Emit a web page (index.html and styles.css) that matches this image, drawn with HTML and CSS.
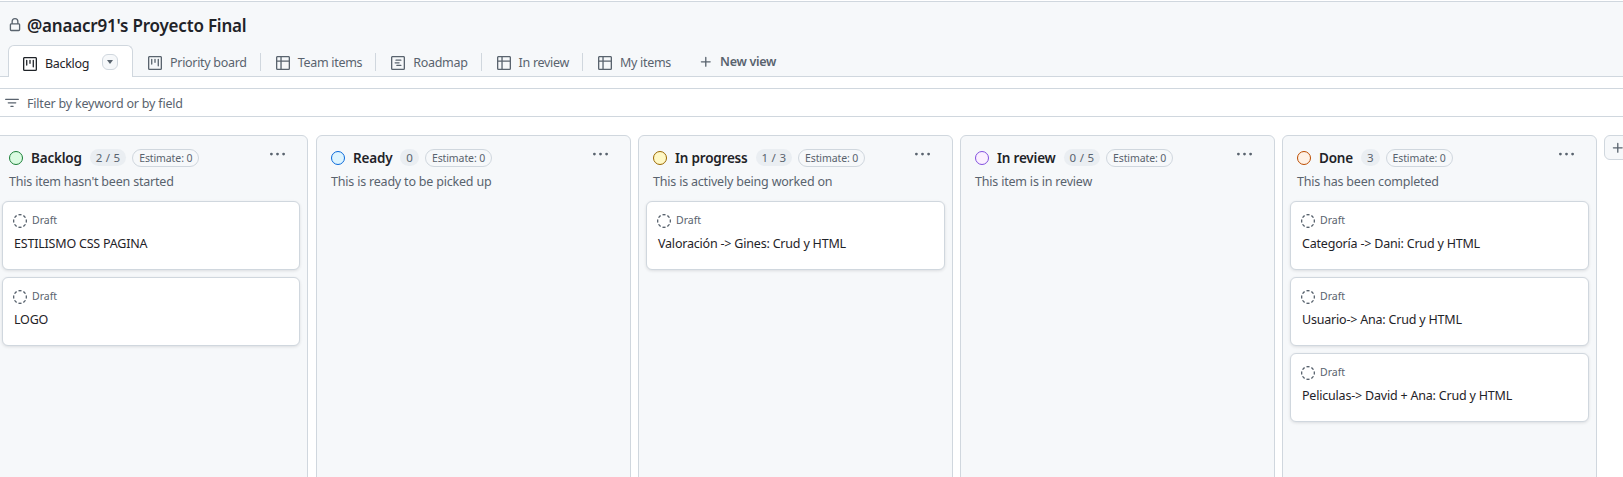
FILE: index.html
```html
<!DOCTYPE html>
<html lang="en">
<head>
<meta charset="utf-8">
<title>@anaacr91's Proyecto Final</title>
<link rel="stylesheet" href="styles.css">
</head>
<body>
<svg class="sprite" aria-hidden="true">
  <symbol id="i-lock" viewBox="0 0 16 16"><path d="M4 4a4 4 0 0 1 8 0v2h.25c.966 0 1.75.784 1.75 1.75v5.5A1.75 1.75 0 0 1 12.25 15h-8.5A1.75 1.75 0 0 1 2 13.25v-5.5C2 6.784 2.784 6 3.75 6H4Zm8.25 3.5h-8.5a.25.25 0 0 0-.25.25v5.5c0 .138.112.25.25.25h8.5a.25.25 0 0 0 .25-.25v-5.5a.25.25 0 0 0-.25-.25ZM10.5 6V4a2.5 2.5 0 1 0-5 0v2Z"/></symbol>
  <symbol id="i-project" viewBox="0 0 16 16"><path d="M1.75 0h12.5C15.216 0 16 .784 16 1.75v12.5A1.75 1.75 0 0 1 14.25 16H1.75A1.75 1.75 0 0 1 0 14.25V1.75C0 .784.784 0 1.75 0ZM1.5 1.75v12.5c0 .138.112.25.25.25h12.5a.25.25 0 0 0 .25-.25V1.75a.25.25 0 0 0-.25-.25H1.75a.25.25 0 0 0-.25.25ZM11.75 3a.75.75 0 0 1 .75.75v7.5a.75.75 0 0 1-1.5 0v-7.5a.75.75 0 0 1 .75-.75Zm-8.25.75a.75.75 0 0 1 1.5 0v5.5a.75.75 0 0 1-1.5 0ZM8 3a.75.75 0 0 1 .75.75v3.5a.75.75 0 0 1-1.5 0v-3.5A.75.75 0 0 1 8 3Z"/></symbol>
  <symbol id="i-table" viewBox="0 0 16 16"><path d="M0 1.75C0 .784.784 0 1.75 0h12.5C15.216 0 16 .784 16 1.75v12.5A1.75 1.75 0 0 1 14.25 16H1.75A1.75 1.75 0 0 1 0 14.25ZM6.5 6.5v8h7.75a.25.25 0 0 0 .25-.25V6.5Zm8-1.5V1.75a.25.25 0 0 0-.25-.25H6.5V5Zm-13 1.5v7.75c0 .138.112.25.25.25H5v-8ZM5 5V1.5H1.75a.25.25 0 0 0-.25.25V5Z"/></symbol>
  <symbol id="i-roadmap" viewBox="0 0 16 16"><path d="M4.75 7a.75.75 0 0 0 0 1.5h4.5a.75.75 0 0 0 0-1.5h-4.5ZM5 4.75A.75.75 0 0 1 5.75 4h5.5a.75.75 0 0 1 0 1.5h-5.5A.75.75 0 0 1 5 4.75ZM6.75 10a.75.75 0 0 0 0 1.5h4.5a.75.75 0 0 0 0-1.5h-4.5Z"/><path d="M0 1.75C0 .784.784 0 1.75 0h12.5C15.216 0 16 .784 16 1.75v12.5A1.75 1.75 0 0 1 14.25 16H1.75A1.75 1.75 0 0 1 0 14.25Zm1.75-.25a.25.25 0 0 0-.25.25v12.5c0 .138.112.25.25.25h12.5a.25.25 0 0 0 .25-.25V1.75a.25.25 0 0 0-.25-.25Z"/></symbol>
  <symbol id="i-plus" viewBox="0 0 16 16"><path d="M7.75 2a.75.75 0 0 1 .75.75V7h4.25a.75.75 0 0 1 0 1.5H8.5v4.25a.75.75 0 0 1-1.5 0V8.5H2.75a.75.75 0 0 1 0-1.5H7V2.75A.75.75 0 0 1 7.75 2Z"/></symbol>
  <symbol id="i-kebab" viewBox="0 0 16 16"><path d="M8 9a1.5 1.5 0 1 0 0-3 1.5 1.5 0 0 0 0 3ZM1.5 9a1.5 1.5 0 1 0 0-3 1.5 1.5 0 0 0 0 3Zm13 0a1.5 1.5 0 1 0 0-3 1.5 1.5 0 0 0 0 3Z"/></symbol>
  <symbol id="i-filter" viewBox="0 0 16 16"><path d="M.75 3h14.5a.75.75 0 0 1 0 1.5H.75a.75.75 0 0 1 0-1.5ZM3 7.75A.75.75 0 0 1 3.75 7h8.5a.75.75 0 0 1 0 1.5h-8.5A.75.75 0 0 1 3 7.75Zm3 4a.75.75 0 0 1 .75-.75h2.5a.75.75 0 0 1 0 1.5h-2.5a.75.75 0 0 1-.75-.75Z"/></symbol>
  <symbol id="i-draft" viewBox="0 0 16 16"><path d="M14.307 11.655a.75.75 0 0 1 .165 1.048 8.05 8.05 0 0 1-1.769 1.77.75.75 0 0 1-.883-1.214 6.552 6.552 0 0 0 1.44-1.439.75.75 0 0 1 1.047-.165Zm-2.652-9.962a.75.75 0 0 1 1.048-.165 8.05 8.05 0 0 1 1.77 1.769.75.75 0 0 1-1.214.883 6.552 6.552 0 0 0-1.439-1.44.75.75 0 0 1-.165-1.047ZM6.749.097a8.074 8.074 0 0 1 2.502 0 .75.75 0 1 1-.233 1.482 6.558 6.558 0 0 0-2.036 0A.751.751 0 0 1 6.749.097ZM.955 6.125a.75.75 0 0 1 .624.857 6.558 6.558 0 0 0 0 2.036.75.75 0 1 1-1.482.233 8.074 8.074 0 0 1 0-2.502.75.75 0 0 1 .858-.624Zm14.09 0a.75.75 0 0 1 .858.624c.13.829.13 1.673 0 2.502a.75.75 0 1 1-1.482-.233 6.558 6.558 0 0 0 0-2.036.75.75 0 0 1 .624-.857Zm-8.92 8.92a.75.75 0 0 1 .857-.624 6.558 6.558 0 0 0 2.036 0 .75.75 0 1 1 .233 1.482c-.829.13-1.673.13-2.502 0a.75.75 0 0 1-.624-.858Zm-4.432-3.39a.75.75 0 0 1 1.048.165 6.552 6.552 0 0 0 1.439 1.44.751.751 0 0 1-.883 1.212 8.05 8.05 0 0 1-1.77-1.769.75.75 0 0 1 .166-1.048Zm2.652-9.962A.75.75 0 0 1 4.18 2.74a6.556 6.556 0 0 0-1.44 1.44.751.751 0 0 1-1.212-.883 8.05 8.05 0 0 1 1.769-1.77.75.75 0 0 1 1.048.166Z"/></symbol>
</svg>

<div class="page">
  <header class="top">
    <h1 class="title"><svg class="ico lock"><use href="#i-lock"/></svg><span>@anaacr91's Proyecto Final</span></h1>
    <nav class="tabs">
      <a class="tab active"><svg class="ico"><use href="#i-project"/></svg><span>Backlog</span><span class="caret"><i></i></span></a>
      <a class="tab sep"><svg class="ico"><use href="#i-project"/></svg><span>Priority board</span></a>
      <a class="tab sep"><svg class="ico"><use href="#i-table"/></svg><span>Team items</span></a>
      <a class="tab sep"><svg class="ico"><use href="#i-roadmap"/></svg><span>Roadmap</span></a>
      <a class="tab sep"><svg class="ico"><use href="#i-table"/></svg><span>In review</span></a>
      <a class="tab"><svg class="ico"><use href="#i-table"/></svg><span>My items</span></a>
      <a class="new-view"><svg class="ico"><use href="#i-plus"/></svg><span>New view</span></a>
    </nav>
  </header>

  <div class="filter"><svg class="ico"><use href="#i-filter"/></svg><span>Filter by keyword or by field</span></div>

  <main class="board">
    <section class="col">
      <div class="col-head"><span class="dot green"></span><h2>Backlog</h2><span class="count">2 / 5</span><span class="est">Estimate: 0</span><svg class="ico kebab"><use href="#i-kebab"/></svg></div>
      <p class="desc">This item hasn't been started</p>
      <article class="card"><div class="draft"><svg class="ico"><use href="#i-draft"/></svg><span>Draft</span></div><p class="card-title">ESTILISMO CSS PAGINA</p></article>
      <article class="card"><div class="draft"><svg class="ico"><use href="#i-draft"/></svg><span>Draft</span></div><p class="card-title">LOGO</p></article>
    </section>
    <section class="col">
      <div class="col-head"><span class="dot blue"></span><h2>Ready</h2><span class="count">0</span><span class="est">Estimate: 0</span><svg class="ico kebab"><use href="#i-kebab"/></svg></div>
      <p class="desc">This is ready to be picked up</p>
    </section>
    <section class="col">
      <div class="col-head"><span class="dot yellow"></span><h2>In progress</h2><span class="count">1 / 3</span><span class="est">Estimate: 0</span><svg class="ico kebab"><use href="#i-kebab"/></svg></div>
      <p class="desc">This is actively being worked on</p>
      <article class="card"><div class="draft"><svg class="ico"><use href="#i-draft"/></svg><span>Draft</span></div><p class="card-title">Valoración -&gt; Gines: Crud y HTML</p></article>
    </section>
    <section class="col">
      <div class="col-head"><span class="dot purple"></span><h2>In review</h2><span class="count">0 / 5</span><span class="est">Estimate: 0</span><svg class="ico kebab"><use href="#i-kebab"/></svg></div>
      <p class="desc">This item is in review</p>
    </section>
    <section class="col">
      <div class="col-head"><span class="dot orange"></span><h2>Done</h2><span class="count">3</span><span class="est">Estimate: 0</span><svg class="ico kebab"><use href="#i-kebab"/></svg></div>
      <p class="desc">This has been completed</p>
      <article class="card"><div class="draft"><svg class="ico"><use href="#i-draft"/></svg><span>Draft</span></div><p class="card-title">Categoría -&gt; Dani: Crud y HTML</p></article>
      <article class="card"><div class="draft"><svg class="ico"><use href="#i-draft"/></svg><span>Draft</span></div><p class="card-title">Usuario-&gt; Ana: Crud y HTML</p></article>
      <article class="card"><div class="draft"><svg class="ico"><use href="#i-draft"/></svg><span>Draft</span></div><p class="card-title">Peliculas-&gt; David + Ana: Crud y HTML</p></article>
    </section>
    <button class="add-col"><svg class="ico"><use href="#i-plus"/></svg></button>
  </main>
</div>
</body>
</html>
```

FILE: styles.css
```css
* { box-sizing: border-box; }
html, body { margin: 0; height: 100%; }
body { background: #fff; color: #1f2328; font-family: "Noto Sans", "Open Sans", sans-serif; overflow: hidden; }
.sprite { display: none; }
.page { height: 477px; overflow: hidden; padding-top: 1px; }
.ico { width: 14px; height: 14px; fill: currentColor; flex: none; display: block; }

.top { background: #f6f8fa; border-top: 1px solid #d0d7de; border-bottom: 1px solid #d0d7de; height: 76px; }
.title { margin: 0; height: 43px; padding: 3px 0 0 8px; display: flex; align-items: center; gap: 5px; font-size: 17px; font-weight: 600; letter-spacing: -0.2px; }
.lock { color: #59636e; }

.tabs { display: flex; align-items: flex-start; height: 31px; padding-left: 8px; }
.tab { display: flex; align-items: center; gap: 8px; height: 31px; padding: 4px 14px 0 15px; color: #59636e; font-size: 12.5px; position: relative; white-space: nowrap; letter-spacing: -0.3px; }
.tab.sep::after { content: ""; position: absolute; right: 0; top: 8px; height: 18px; width: 1px; background: #d0d7de; }
.tab.active { background: #fff; color: #1f2328; border: 1px solid #d0d7de; border-bottom: 0; border-radius: 6px 6px 0 0; width: 125px; padding: 4px 14px 0; height: 32px; }
.caret { width: 16px; height: 16px; border: 1px solid #d0d7de; border-radius: 6px; background: #f6f8fa; margin: -3px 0 0 5px; display: flex; align-items: center; justify-content: center; }
.caret i { display: block; width: 0; height: 0; border: 3px solid transparent; border-top: 4px solid #59636e; border-bottom: 0; }
.new-view { display: flex; align-items: center; gap: 7px; height: 31px; padding-top: 2px; margin-left: 14px; color: #59636e; font-size: 12.5px; font-weight: 600; letter-spacing: -0.3px; }

.filter { margin-top: 11px; height: 29px; border-top: 1px solid #d0d7de; border-bottom: 1px solid #d0d7de; display: flex; align-items: center; gap: 8px; padding: 1px 0 0 5px; color: #59636e; font-size: 12.5px; letter-spacing: -0.2px; }

.board { display: flex; align-items: flex-start; gap: 7px; margin: 18px 0 0 -6px; }
.col { flex: none; width: 315px; height: 400px; background: #f6f8fa; border: 1px solid #d0d7de; border-radius: 6px; padding: 0 7px; }
.col:first-child { width: 314px; margin-right: 1px; }
.col-head { display: flex; align-items: center; height: 34px; padding: 9px 7px 0; position: relative; }
.col-head h2 { margin: 0 8px; font-size: 13.5px; font-weight: 600; letter-spacing: -0.2px; }
.dot { width: 14px; height: 14px; border-radius: 50%; border: 1px solid; flex: none; }
.green { background: #dafbe1; border-color: #1a7f37; }
.blue { background: #ddf4ff; border-color: #0969da; }
.yellow { background: #fff8c5; border-color: #9a6700; }
.purple { background: #fbefff; border-color: #8250df; }
.orange { background: #fff1e5; border-color: #bc4c00; }
.count { background: #eaeef2; color: #59636e; border-radius: 9px; height: 17px; min-width: 18px; padding: 0 6px; display: flex; align-items: center; justify-content: center; font-size: 11.5px; margin-right: 6px; word-spacing: 0.5px; }
.est { border: 1px solid #d0d7de; border-radius: 9px; height: 18px; padding: 0 6px; display: flex; align-items: center; font-size: 10.5px; color: #59636e; letter-spacing: -0.1px; }
.kebab { margin-left: auto; color: #59636e; margin-right: 8px; width: 15px; height: 15px; margin-top: -6px; }
.desc { margin: 3px 0 0; padding-left: 7px; height: 28px; font-size: 12.5px; color: #59636e; letter-spacing: -0.2px; line-height: 18px; }

.card { background: #fff; border: 1px solid #d0d7de; border-radius: 6px; height: 69px; margin-bottom: 7px; padding: 12px 10px 0; box-shadow: 0 1px 3px rgba(31,35,40,.12); }
.draft { display: flex; align-items: center; gap: 5px; font-size: 10.5px; color: #59636e; }
.draft span { margin-top: -2px; }
.draft .ico { color: #59636e; }
.card-title { margin: 7px 0 0 1px; font-size: 12.5px; line-height: 18px; color: #1f2328; letter-spacing: -0.2px; }

.add-col { flex: none; width: 28px; height: 25px; padding: 0; background: #f6f8fa; border: 1px solid #d0d7de; border-radius: 6px; color: #59636e; display: flex; align-items: center; justify-content: center; }
```
